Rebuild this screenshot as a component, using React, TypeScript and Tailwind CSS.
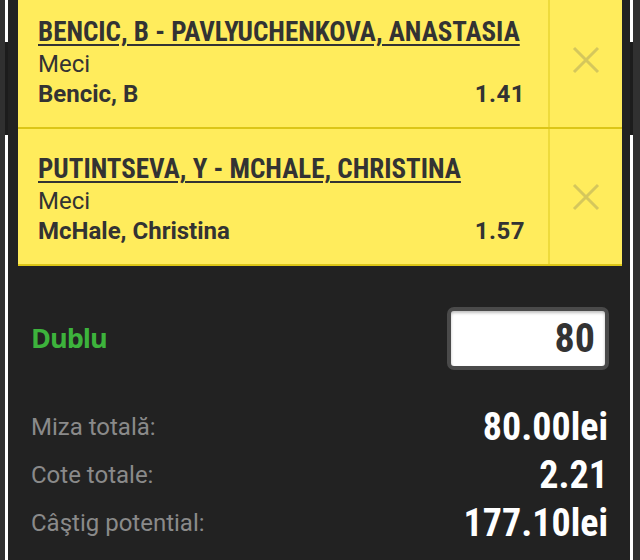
const cond = { fontFamily: '"Roboto Condensed", "Liberation Sans Narrow", "DejaVu Sans Condensed", sans-serif' };
const roboto = { fontFamily: 'Roboto, "Liberation Sans", sans-serif' };

const bets = [
  { match: 'BENCIC, B - PAVLYUCHENKOVA, ANASTASIA', market: 'Meci', pick: 'Bencic, B', odds: '1.41' },
  { match: 'PUTINTSEVA, Y - MCHALE, CHRISTINA', market: 'Meci', pick: 'McHale, Christina', odds: '1.57' },
];

const summary = [
  { label: 'Miza totală:', value: '80.00lei' },
  { label: 'Cote totale:', value: '2.21' },
  { label: 'Câştig potential:', value: '177.10lei' },
];

function CloseIcon() {
  return (
    <svg width="28" height="28" viewBox="0 0 28 28" className="text-[#d5c75c]">
      <path d="M2 2 L26 26 M26 2 L2 26" stroke="currentColor" strokeWidth="3" fill="none" />
    </svg>
  );
}

function BetCard({ bet }: { bet: (typeof bets)[number] }) {
  return (
    <div className="flex h-[137px] border-b-2 border-[#dcc616] bg-[#ffec5c]">
      <div className="flex flex-1 flex-col pl-[20px] pr-[23px] pt-[24px] text-[#333]">
        <div className="text-[27px] font-bold leading-[33px] underline decoration-2 underline-offset-[3px]" style={cond}>
          {bet.match}
        </div>
        <div className="text-[24px] leading-[30px]" style={roboto}>{bet.market}</div>
        <div className="flex items-center justify-between text-[24px] font-bold leading-[30px]" style={roboto}>
          <span>{bet.pick}</span>
          <span className="tracking-[0.5px]">{bet.odds}</span>
        </div>
      </div>
      <div className="w-[2px] bg-[#eedb3c]" />
      <div className="flex w-[72px] items-center justify-center">
        <CloseIcon />
      </div>
    </div>
  );
}

export default function App() {
  return (
    <div className="flex h-[560px] w-[640px] overflow-hidden bg-[#2e2e2e]">
      <div className="w-[5px] bg-[#303030]" />
      <div className="flex w-[3px] flex-col">
        <div className="h-[42px] bg-white" />
        <div className="h-[93px] bg-[#1c1c1c]" />
        <div className="flex-1 bg-white" />
      </div>

      <div className="flex flex-1 flex-col bg-[#222] pl-[10px] pr-[8px]">
        <div className="-mt-[8px] flex flex-col">
          {bets.map((b, i) => (
            <BetCard key={i} bet={b} />
          ))}
        </div>

        <div className="flex items-center justify-between pl-[13px] pr-[13px] pt-[41px]">
          <span
            className="text-[27px] font-bold tracking-[-1px] text-[#3db33c]"
            style={{ fontFamily: '"Open Sans", "Noto Sans", sans-serif' }}
          >
            Dublu
          </span>
          <div className="flex h-[63px] w-[162px] items-center justify-end rounded-[7px] border-4 border-[#4a4a4a] bg-white pr-[10px] shadow-[inset_0_2px_3px_rgba(0,0,0,0.25)]">
            <span className="text-[40px] font-bold leading-none text-[#333]" style={cond}>80</span>
          </div>
        </div>

        <div className="flex flex-col pl-[13px] pr-[14px] pt-[33px]">
          {summary.map((s) => (
            <div key={s.label} className="flex h-[48px] items-center justify-between">
              <span className="text-[24px] text-[#8a8a8a]" style={roboto}>{s.label}</span>
              <span className="text-[38px] font-bold text-white" style={cond}>{s.value}</span>
            </div>
          ))}
        </div>
      </div>

      <div className="flex w-[3px] flex-col">
        <div className="h-[42px] bg-white" />
        <div className="h-[93px] bg-[#1c1c1c]" />
        <div className="flex-1 bg-white" />
      </div>
      <div className="w-[7px] bg-[#303030]" />
    </div>
  );
}
